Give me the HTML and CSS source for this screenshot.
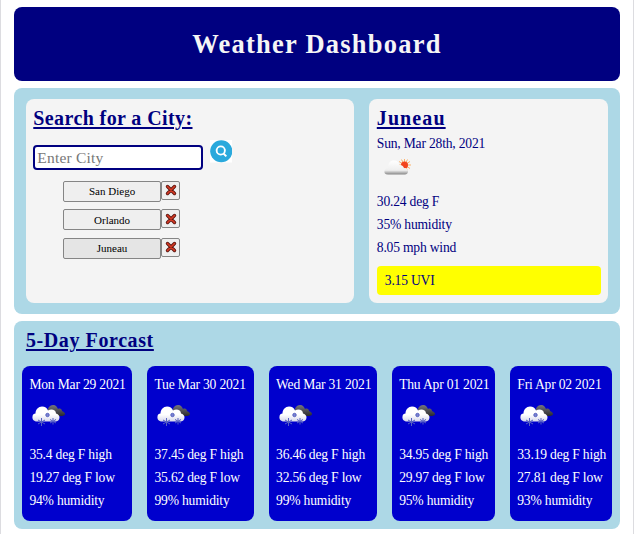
FILE: index.html
```
<!DOCTYPE html>
<html lang="en">
<head>
<meta charset="utf-8">
<title>Weather Dashboard</title>
<link rel="stylesheet" href="styles.css">
</head>
<body>
<svg class="defs" width="0" height="0">
  <defs>
    <linearGradient id="white" x1="0" y1="0" x2="0" y2="1"><stop offset=".55" stop-color="#fff"/><stop offset="1" stop-color="#d5d6ea"/></linearGradient>
    <linearGradient id="soft" x1="0" y1="0" x2="0" y2="1"><stop offset="0" stop-color="#fff"/><stop offset=".7" stop-color="#eee"/><stop offset="1" stop-color="#858585"/></linearGradient>
    <linearGradient id="dark" x1="0" y1="0" x2="0" y2="1"><stop offset="0" stop-color="#77777c"/><stop offset="1" stop-color="#29292d"/></linearGradient>
  </defs>
  <symbol id="snow" viewBox="0 0 34 24">
    <path d="M16 8C15 4 18 1 21 1c3 0 4 2 5 4 2-1 4 0 4 2 2 1 3 2 3 3 0 1.500-2 2-4 2H20z" fill="url(#dark)"/>
    <path d="M5 17.500C1.500 17.500 0 15 .5 12.500c0-2 1.500-3 3-3 0-4 3-7 6.500-7 3 0 5 1.500 6 4C19.500 4.500 24 6 24 9.500c2 .5 3.500 2 3.500 4 0 2.500-2 4-4 4z" fill="url(#white)"/>
    <g fill="none" stroke="#5761c2" stroke-width="1">
      <path d="M9.500 14v8M6 16l7 4M13 16l-7 4M21 14v6.500M18 15.500l6 3.500M24 15.500l-6 3.500"/>
      <circle cx="15.500" cy="11" r="1.700" fill="#7a83cf"/>
    </g>
  </symbol>
  <symbol id="cross" viewBox="0 0 12 12">
    <path d="M2.500 2.500l7 7M9.500 2.500l-7 7" stroke="#5c1712" stroke-width="3.400" stroke-linecap="round"/>
    <path d="M2.500 2.500l7 7M9.500 2.500l-7 7" stroke="#d63a24" stroke-width="1.700" stroke-linecap="round"/>
  </symbol>
</svg>
<div class="page">
  <header class="banner"><h1>Weather Dashboard</h1></header>
  <main class="top">
    <section class="card search">
      <h2 class="h-search">Search for a City:</h2>
      <form class="form">
        <input type="text" placeholder="Enter City" aria-label="City">
        <svg class="magnifier" viewBox="0 0 23 23"><rect width="23" height="23" fill="#fff"/><circle cx="11.500" cy="11.500" r="11.300" fill="#2aa9dc"/><circle cx="11" cy="10.700" r="4.200" fill="none" stroke="#fff" stroke-width="1.900"/><path d="M14 14l2.700 2.700" stroke="#fff" stroke-width="2"/></svg>
      </form>
      <ul class="cities">
        <li><button type="button" class="city">San Diego</button><button type="button" class="del"><svg><use href="#cross"/></svg></button></li>
        <li><button type="button" class="city">Orlando</button><button type="button" class="del"><svg><use href="#cross"/></svg></button></li>
        <li><button type="button" class="city active">Juneau</button><button type="button" class="del"><svg><use href="#cross"/></svg></button></li>
      </ul>
    </section>
    <section class="card today">
      <h2 class="h-city">Juneau</h2>
      <p class="date">Sun, Mar 28th, 2021</p>
      <svg class="sun-cloud" viewBox="0 0 28 18">
        <path d="M20.500 1v12M15 3.500l11 7M26 3.500l-11 7M14.500 7h12.500M17.500 1.500l6 11M23.500 1.500l-6 11" stroke="#fbb26a" stroke-width="1"/>
        <circle cx="20.500" cy="7" r="3.500" fill="#f2441d"/>
        <path d="M4 16.500C1 16.500 0 15 .5 12.500 1 11 2.500 10 4 10c0-5 2-7.500 6-7.500 3 0 5 2 5.500 4.500 3 0 4 1.500 4.500 3 3 0 4 1.500 4 3.500 0 2-1.500 3-3 3z" fill="url(#soft)"/>
      </svg>
      <p>30.24 deg F</p>
      <p>35% humidity</p>
      <p>8.05 mph wind</p>
      <p class="uvi">3.15 UVI</p>
    </section>
  </main>
  <section class="forecast">
    <h2 class="h-five">5-Day Forcast</h2>
    <div class="days">
      <article><p>Mon Mar 29 2021</p><svg><use href="#snow"/></svg><p>35.4 deg F high</p><p>19.27 deg F low</p><p>94% humidity</p></article>
      <article><p>Tue Mar 30 2021</p><svg><use href="#snow"/></svg><p>37.45 deg F high</p><p>35.62 deg F low</p><p>99% humidity</p></article>
      <article><p>Wed Mar 31 2021</p><svg><use href="#snow"/></svg><p>36.46 deg F high</p><p>32.56 deg F low</p><p>99% humidity</p></article>
      <article><p>Thu Apr 01 2021</p><svg><use href="#snow"/></svg><p>34.95 deg F high</p><p>29.97 deg F low</p><p>95% humidity</p></article>
      <article><p>Fri Apr 02 2021</p><svg><use href="#snow"/></svg><p>33.19 deg F high</p><p>27.81 deg F low</p><p>93% humidity</p></article>
    </div>
  </section>
</div>
</body>
</html>
```
FILE: styles.css
```
* { box-sizing: border-box; }
body { margin: 0; background: #fff; color: navy; font: 13.6px/23px Georgia, "Liberation Serif", serif; letter-spacing: -.2px; overflow: hidden; }
h1, h2, p, ul { margin: 0; padding: 0; }
p { white-space: nowrap; }
.defs { position: absolute; }
.page { height: 534px; padding: 6.6px 13.400px 0 13.400px; border: solid #dcdce0; border-width: 0 1px; }
.banner { height: 74px; border-radius: 8px; background: navy; color: #f5f5f5; display: flex; align-items: center; justify-content: center; }
h1 { font-size: 26.5px; line-height: 30px; letter-spacing: 1.25px; }
.top { display: flex; gap: 15px; height: 226px; margin-top: 7.4px; padding: 11.400px; border-radius: 8px; background: lightblue; }
.card { border-radius: 8px; background: #f4f4f4; padding: 6.800px 7.500px; }
.search { width: 328.500px; }
.today { flex: 1; }
h2 { font-size: 20px; line-height: 24px; text-decoration: underline; text-decoration-thickness: 1.500px; text-underline-offset: 2px; letter-spacing: .6px; white-space: nowrap; }
.h-search { letter-spacing: .4px; }
.h-city { letter-spacing: 1.1px; }
.form { display: flex; gap: 6.500px; margin-top: 10px; height: 29px; }
input { width: 170px; height: 25px; margin-top: 5px; padding: 0 2px; border: 2px solid navy; border-radius: 4px; background: #fff; font: 15.500px Georgia, "Liberation Serif", serif; letter-spacing: .2px; outline: none; }
input::placeholder { color: #777; opacity: 1; }
.magnifier { width: 22.500px; height: 22.500px; }
.cities { list-style: none; padding-left: 29.800px; margin-top: 11.700px; }
.cities li { display: flex; height: 28.500px; }
button { border: 1px solid #858585; border-radius: 2px; background: #efefef; color: #000; padding: 0; }
.city { width: 98px; height: 21px; font: 11px Georgia, "Liberation Serif", serif; }
.active { background: #e5e5e5; }
.del { width: 19px; height: 19px; display: flex; align-items: center; justify-content: center; }
.del svg { width: 12px; height: 12px; }
.date { margin-top: 2px; }
.sun-cloud { display: block; width: 28px; height: 18px; margin: 3px 0 14px 7px; }
.uvi { height: 29px; margin-top: 6.800px; padding: 3px 8px; border-radius: 4px; background: #ff0; }
.forecast { height: 207.400px; margin-top: 7.300px; padding: 6.700px 7.500px 0; border-radius: 8px; background: lightblue; }
.h-five { padding-left: 4px; }
.days { display: grid; grid-template-columns: 110.500px 107px 108.500px 103.500px 102.500px; gap: 14.600px; margin-top: 13.600px; }
.days article { height: 155.300px; padding: 7px 0 0 7.500px; border-radius: 8px; background: mediumblue; color: #fff; }
.days svg { display: block; width: 34px; height: 24px; margin: 8px 0 15px 3px; }
```
